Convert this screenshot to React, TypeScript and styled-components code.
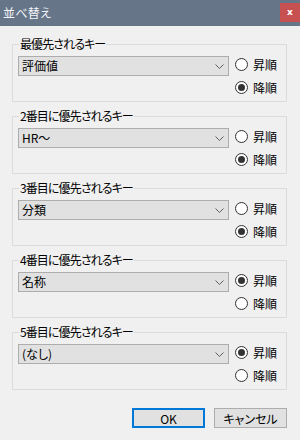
import React from "react";
import styled, { createGlobalStyle } from "styled-components";

const GlobalStyle = createGlobalStyle`
  html, body {
    margin: 0;
    padding: 0;
    background: #f0f0f0;
  }
  body {
    font-family: "Noto Sans CJK JP", "Noto Sans", sans-serif;
    font-size: 12px;
    font-feature-settings: "palt";
    color: #000;
  }
`;

const Window = styled.div`
  width: 300px;
  height: 440px;
  background: #f0f0f0;
  display: flex;
  flex-direction: column;
  overflow: hidden;
`;

const TitleBar = styled.div`
  height: 26px;
  background: #677589;
  display: flex;
  align-items: flex-start;
  justify-content: space-between;
  flex-shrink: 0;
`;

const Title = styled.span`
  color: #f4f6fa;
  font-size: 12px;
  line-height: 26px;
  padding-left: 3px;
  letter-spacing: 0.3px;
`;

const CloseButton = styled.div`
  width: 20px;
  height: 19px;
  margin-top: 3px;
  background: #c75050;
  color: #fff;
  display: flex;
  align-items: center;
  justify-content: center;
  font-family: "DejaVu Sans", sans-serif;
  font-weight: bold;
  font-size: 9px;
  line-height: 1;
`;

const Body = styled.div`
  padding: 10px 13px 0 12px;
  display: flex;
  flex-direction: column;
  gap: 6px;
`;

const Group = styled.fieldset`
  margin: 0;
  padding: 4px 0 6px 5px;
  border: 1px solid #dcdcdc;
  min-width: 0;
  display: grid;
  grid-template-columns: 211px 1fr;
  column-gap: 6px;
`;

const Legend = styled.legend`
  padding: 0 1px;
  margin-left: 1px;
  line-height: 16px;
  font-size: 12px;
  letter-spacing: -0.9px;
`;

const Combo = styled.div`
  box-sizing: border-box;
  height: 20px;
  background: #e1e1e1;
  border: 1px solid #adadad;
  display: flex;
  align-items: center;
  justify-content: space-between;
  padding: 0 4px 0 3px;
`;

const ComboText = styled.span`
  line-height: 18px;
  white-space: nowrap;
`;

const Radios = styled.div`
  display: flex;
  flex-direction: column;
  gap: 7px;
`;

const RadioRow = styled.div`
  height: 16px;
  display: flex;
  align-items: center;
  gap: 5px;
`;

const Circle = styled.span<{ $on: boolean }>`
  box-sizing: border-box;
  width: 13px;
  height: 13px;
  border-radius: 50%;
  border: 1px solid #333;
  background: #fff;
  display: flex;
  align-items: center;
  justify-content: center;
  &::after {
    content: "";
    width: 7px;
    height: 7px;
    border-radius: 50%;
    background: #333;
    display: ${(p) => (p.$on ? "block" : "none")};
  }
`;

const ButtonRow = styled.div`
  margin-top: 12px;
  display: flex;
  justify-content: flex-end;
  gap: 9px;
`;

const Button = styled.div<{ $primary?: boolean }>`
  box-sizing: border-box;
  width: 73px;
  height: 20px;
  background: #e1e1e1;
  border: ${(p) => (p.$primary ? "2px solid #0078d7" : "1px solid #adadad")};
  display: flex;
  align-items: center;
  justify-content: center;
  font-size: 12px;
`;

const Chevron = () => (
  <svg width="9" height="5" viewBox="0 0 9 5">
    <polyline points="0.5,0.5 4.5,4.5 8.5,0.5" fill="none" stroke="#606060" strokeWidth="1" />
  </svg>
);

interface SortKey {
  label: string;
  value: string;
  ascending: boolean;
}

const keys: SortKey[] = [
  { label: "最優先されるキー", value: "評価値", ascending: false },
  { label: "2番目に優先されるキー", value: "HR～", ascending: false },
  { label: "3番目に優先されるキー", value: "分類", ascending: false },
  { label: "4番目に優先されるキー", value: "名称", ascending: true },
  { label: "5番目に優先されるキー", value: "(なし)", ascending: true },
];

export default function App() {
  return (
    <Window>
      <GlobalStyle />
      <TitleBar>
        <Title>並べ替え</Title>
        <CloseButton>x</CloseButton>
      </TitleBar>
      <Body>
        {keys.map((k) => (
          <Group key={k.label}>
            <Legend>{k.label}</Legend>
            <Combo>
              <ComboText>{k.value}</ComboText>
              <Chevron />
            </Combo>
            <Radios>
              <RadioRow>
                <Circle $on={k.ascending} />
                昇順
              </RadioRow>
              <RadioRow>
                <Circle $on={!k.ascending} />
                降順
              </RadioRow>
            </Radios>
          </Group>
        ))}
        <ButtonRow>
          <Button $primary>OK</Button>
          <Button>キャンセル</Button>
        </ButtonRow>
      </Body>
    </Window>
  );
}
